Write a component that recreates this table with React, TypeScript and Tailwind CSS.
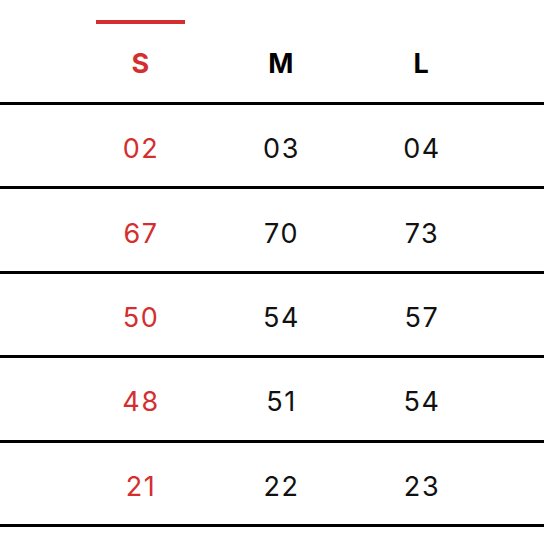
const sizes = ["S", "M", "L", "XL"];

const rows = [
  ["02", "03", "04", "05"],
  ["67", "70", "73", "76"],
  ["50", "54", "57", "61"],
  ["48", "51", "54", "57"],
  ["21", "22", "23", "24"],
];

export default function App() {
  const active = 0;
  return (
    <div
      className="w-[544px] h-[544px] overflow-hidden bg-white text-black"
      style={{ fontFamily: 'Inter, "Liberation Sans", Arial, sans-serif' }}
    >
      <div className="w-[700px]">
        <div className="grid grid-cols-[70px_repeat(4,140.5px)] h-[105px] border-b-[3px] border-black">
          <div />
          {sizes.map((s, i) => (
            <div key={s} className="flex flex-col items-center pt-[20px]">
              <div
                className={`h-[4px] w-[89px] ${i === active ? "bg-[#d32f2f]" : "bg-transparent"}`}
              />
              <div
                className={`mt-[24px] text-[27px] leading-[32px] font-bold ${
                  i === active ? "text-[#d32f2f]" : "text-black"
                }`}
              >
                {s}
              </div>
            </div>
          ))}
        </div>
        {rows.map((r, ri) => (
          <div
            key={ri}
            className="grid grid-cols-[70px_repeat(4,140.5px)] h-[84.4px] border-b-[3px] border-black items-center"
          >
            <div />
            {r.map((v, i) => (
              <div
                key={i}
                className={`text-center text-[27px] leading-[32px] tracking-[0.06em] pl-[0.06em] pt-[7px] ${
                  i === active ? "text-[#d32f2f]" : "text-[#111]"
                }`}
              >
                {v}
              </div>
            ))}
          </div>
        ))}
      </div>
    </div>
  );
}
